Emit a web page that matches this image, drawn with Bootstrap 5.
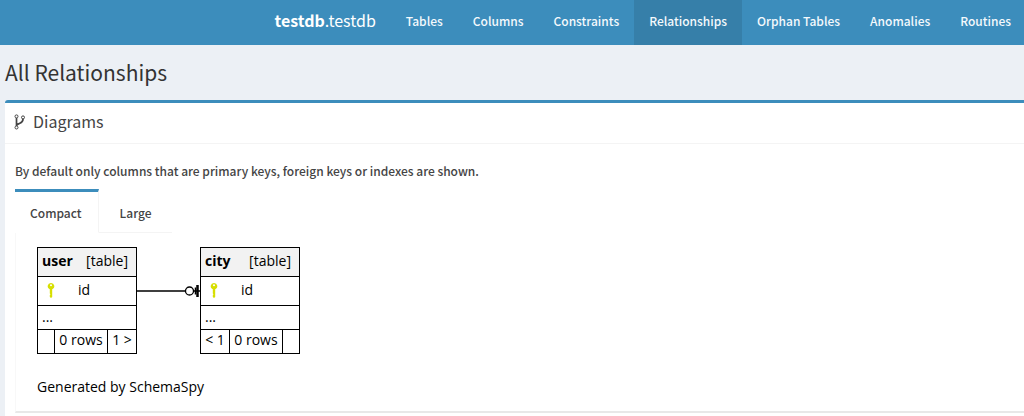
<!DOCTYPE html>
<html lang="en">
<head>
<meta charset="utf-8">
<meta name="viewport" content="width=device-width, initial-scale=1">
<title>All Relationships - testdb.testdb</title>
<link href="https://cdn.jsdelivr.net/npm/bootstrap@5.3.0/dist/css/bootstrap.min.css" rel="stylesheet">
<style>
  body { font-family: "Noto Sans CJK SC", "Open Sans", sans-serif; font-size: 12px; font-weight: 500; line-height: 20px; color: #333; background: #ecf0f5; }
  .topbar { background: #3c8dbc; height: 45px; padding: 0; }
  .topbar .navbar-brand { font-size: 16px; font-weight: 400; line-height: 20px; padding: 10px 15px 15px; margin: 0; color: #fff; }
  .topbar .navbar-nav .nav-link { color: #f4f9fc; line-height: 20px; padding: 11px 15px 14px; white-space: nowrap; }
  .topbar .navbar-nav .nav-link.active { background: #367fa9; color: #f4f9fc; }
  .topbar .navbar-nav .nav-item:last-child .nav-link { padding-right: 13px; }
  .page-area { padding-left: 5px; }
  .page-title { font-size: 21px; line-height: 28px; padding: 13px 0 14px; margin: 0; font-weight: 400; }
  .panel-box { border: 0; border-top: 3px solid #3c8dbc; border-radius: 3px 0 0 0; color: #444; }
  .panel-box > .card-header { background: #fff; border-bottom: 1px solid #f4f4f4; padding: 8px 9px 11px; }
  .panel-box h2 { font-size: 16px; line-height: 21px; font-weight: 400; color: #444; }
  .panel-box > .card-body { padding: 17px 0 10px 10px; }
  .view-tabs { border: 0; }
  .view-tabs .nav-link { border: 0; border-top: 3px solid transparent; border-bottom: 1px solid #f4f4f4; border-radius: 0; color: #444; line-height: 20px; padding: 11px 21px 9px; }
  .view-tabs .nav-link.active { color: #444; border-top-color: #3c8dbc; border-right: 1px solid #f4f4f4; border-bottom-color: #fff; padding: 11px 16px 9px 15px; }
  .view-pane { border-left: 1px solid #f8f8f8; border-bottom: 2px solid #e8e8e8; padding: 15px 21px; font-family: "Open Sans", sans-serif; font-weight: 400; color: #000; }
  .entity { width: 100px; table-layout: fixed; border-collapse: collapse; font-size: 14px; line-height: 18px; white-space: nowrap; }
  .entity th, .entity td { border: 1px solid #000; padding: 0 4px 2px; }
  .entity thead th { background: #f2f2f2; height: 29px; }
  .entity .col-line td { height: 29px; }
  .entity .more td, .entity .counts td { height: 24px; }
  .entity .counts td { padding: 0 0 3px; text-align: center; }
  .key-cell { gap: 22px; }
  .slim { width: 17px; } .rel { width: 29px; }
  .made-by { font-size: 14px; line-height: 18px; }
</style>
</head>
<body>
<nav class="navbar navbar-expand topbar justify-content-end flex-nowrap" aria-label="Main">
  <a class="navbar-brand" href="#"><b>testdb</b>.testdb</a>
  <ul class="navbar-nav">
    <li class="nav-item"><a class="nav-link" href="#">Tables</a></li>
    <li class="nav-item"><a class="nav-link" href="#">Columns</a></li>
    <li class="nav-item"><a class="nav-link" href="#">Constraints</a></li>
    <li class="nav-item"><a class="nav-link active" aria-current="page" href="#">Relationships</a></li>
    <li class="nav-item"><a class="nav-link" href="#">Orphan Tables</a></li>
    <li class="nav-item"><a class="nav-link" href="#">Anomalies</a></li>
    <li class="nav-item"><a class="nav-link" href="#">Routines</a></li>
  </ul>
</nav>
<main class="page-area">
  <h1 class="page-title">All Relationships</h1>
  <section class="card panel-box">
    <div class="card-header d-flex align-items-center gap-2">
      <svg width="11" height="16" viewBox="0 0 11 16" fill="none" stroke="#444" aria-hidden="true"><circle cx="2.500" cy="2.400" r="1.500"/><circle cx="2.500" cy="13.500" r="1.500"/><circle cx="9" cy="3.400" r="1.500"/><path d="M2.500 4v8M9 5c0 3.600-2.200 3.800-4 4.600C3.300 10.200 2.600 10.800 2.500 12" stroke-width="1.700"/></svg>
      <h2 class="mb-0">Diagrams</h2>
    </div>
    <div class="card-body">
      <p class="mb-2">By default only columns that are primary keys, foreign keys or indexes are shown.</p>
      <ul class="nav nav-tabs view-tabs" role="tablist">
        <li class="nav-item" role="presentation"><button class="nav-link active" type="button" role="tab" aria-selected="true">Compact</button></li>
        <li class="nav-item" role="presentation"><button class="nav-link" type="button" role="tab" aria-selected="false">Large</button></li>
      </ul>
      <div class="view-pane" role="tabpanel">
        <div class="d-flex align-items-start">
          <table class="entity">
            <colgroup><col class="slim"><col><col class="rel"></colgroup>
            <thead><tr><th colspan="3"><div class="d-flex justify-content-between pe-1"><span>user</span><span class="fw-normal">[table]</span></div></th></tr></thead>
            <tbody>
              <tr class="col-line"><td colspan="3"><div class="d-flex align-items-center ps-1 key-cell"><svg width="10" height="16" viewBox="0 0 10 16" aria-hidden="true"><path fill="#d7df01" fill-rule="evenodd" d="M5 1a3.200 3.200 0 0 1 1.200 6.200V15L5 16l-1.200-1v-2l.7-.8-.7-.8V7.200A3.200 3.200 0 0 1 5 1zm0 1.300a1 1 0 1 0 0 2 1 1 0 0 0 0-2z"/></svg><span>id</span></div></td></tr>
              <tr class="more"><td colspan="3">...</td></tr>
              <tr class="counts"><td></td><td>0 rows</td><td>1 &gt;</td></tr>
            </tbody>
          </table>
          <svg class="flex-shrink-0" width="63" height="106" viewBox="0 0 63 106" fill="none" stroke="#000" aria-hidden="true"><path d="M0 44H48M56 44h7" stroke-width="1.300"/><circle cx="52.500" cy="44" r="4" stroke-width="1.300"/><path d="M58.500 40.500v7" stroke-width="1.500"/><path d="M60.500 38v12" stroke-width="2.500"/></svg>
          <table class="entity">
            <colgroup><col class="rel"><col><col class="slim"></colgroup>
            <thead><tr><th colspan="3"><div class="d-flex justify-content-between pe-1"><span>city</span><span class="fw-normal">[table]</span></div></th></tr></thead>
            <tbody>
              <tr class="col-line"><td colspan="3"><div class="d-flex align-items-center ps-1 key-cell"><svg width="10" height="16" viewBox="0 0 10 16" aria-hidden="true"><path fill="#d7df01" fill-rule="evenodd" d="M5 1a3.200 3.200 0 0 1 1.200 6.200V15L5 16l-1.200-1v-2l.7-.8-.7-.8V7.200A3.200 3.200 0 0 1 5 1zm0 1.300a1 1 0 1 0 0 2 1 1 0 0 0 0-2z"/></svg><span>id</span></div></td></tr>
              <tr class="more"><td colspan="3">...</td></tr>
              <tr class="counts"><td>&lt; 1</td><td>0 rows</td><td></td></tr>
            </tbody>
          </table>
        </div>
        <p class="made-by mt-4 mb-0">Generated by SchemaSpy</p>
      </div>
    </div>
  </section>
</main>
<script src="https://cdn.jsdelivr.net/npm/bootstrap@5.3.0/dist/js/bootstrap.bundle.min.js"></script>
</body>
</html>
